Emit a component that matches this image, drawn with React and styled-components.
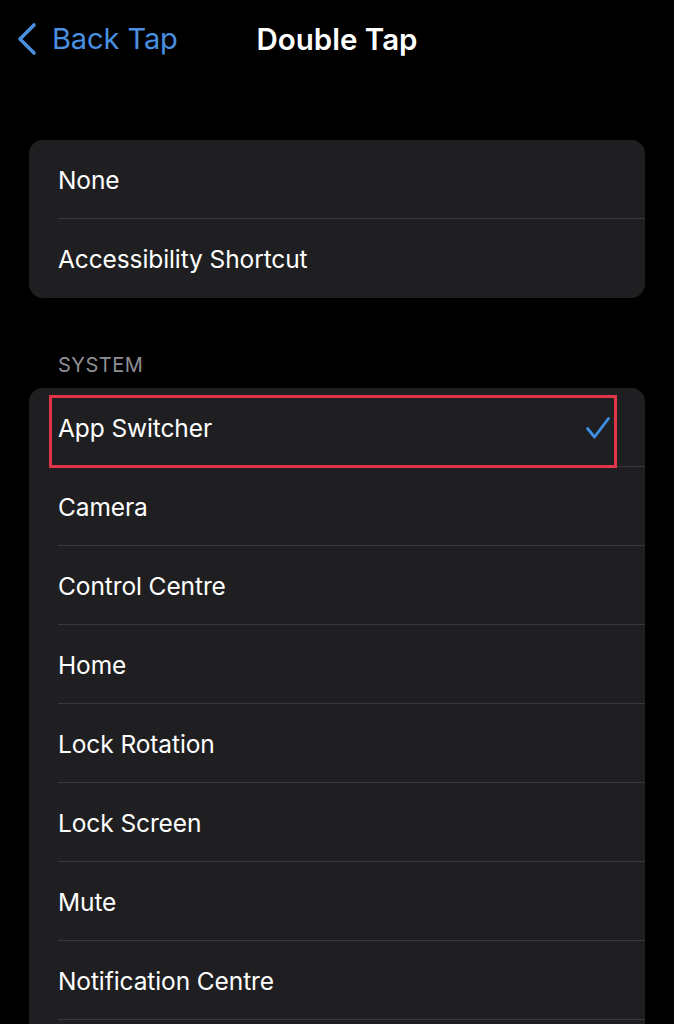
import React from 'react';
import styled, { createGlobalStyle } from 'styled-components';

const GlobalStyle = createGlobalStyle`
  html, body {
    margin: 0;
    padding: 0;
    background: #000;
  }
  body {
    font-family: Inter, "Liberation Sans", sans-serif;
    -webkit-font-smoothing: antialiased;
  }
`;

const Screen = styled.div`
  width: 674px;
  height: 1024px;
  overflow: hidden;
  background: #000;
  color: #fff;
`;

const NavBar = styled.div`
  position: relative;
  height: 78px;
  display: flex;
  align-items: center;
  justify-content: center;
`;

const BackButton = styled.div`
  position: absolute;
  left: 16px;
  top: 21px;
  display: flex;
  align-items: center;
  gap: 14px;
  color: #4a8fe0;
  font-size: 29px;
  letter-spacing: -0.1px;
`;

const Title = styled.div`
  font-size: 29.5px;
  font-weight: 600;
  letter-spacing: 0;
`;

const Content = styled.div`
  padding: 62px 29px 0 29px;
`;

const Group = styled.div`
  background: #1f1f21;
  border-radius: 14px;
  overflow: hidden;
  margin-bottom: ${(p) => p.$gap || 0}px;
`;

const SectionHeader = styled.div`
  padding: 0 0 11px 29px;
  font-size: 20px;
  color: #8e8e93;
  letter-spacing: 0.5px;
`;

const Row = styled.div`
  position: relative;
  height: 79px;
  display: flex;
  align-items: center;
  padding-left: 29px;
  padding-right: 34px;
  font-size: 24.5px;
  letter-spacing: -0.1px;
  box-sizing: border-box;

  &:not(:last-child)::after {
    content: '';
    position: absolute;
    left: 29px;
    right: 0;
    bottom: 0;
    height: 1px;
    background: #38383b;
  }
`;

const Label = styled.span`
  flex: 1;
`;

const Highlight = styled.div`
  position: absolute;
  left: 20px;
  right: 28px;
  top: 7px;
  height: 73px;
  border: 3px solid #e0364c;
  box-sizing: border-box;
  pointer-events: none;
  z-index: 1;
`;

const Check = () => (
  <svg width="26" height="24" viewBox="0 0 26 24" fill="none">
    <path
      d="M2.5 12.5 L9.5 21 L23.5 2.5"
      stroke="#3d8fe4"
      strokeWidth="2.8"
      strokeLinecap="round"
      strokeLinejoin="round"
    />
  </svg>
);

const Chevron = () => (
  <svg width="22" height="34" viewBox="0 0 22 34" fill="none">
    <path
      d="M18 3 L4 17 L18 31"
      stroke="#4a8fe0"
      strokeWidth="3.6"
      strokeLinecap="round"
      strokeLinejoin="round"
    />
  </svg>
);

const topItems = ['None', 'Accessibility Shortcut'];
const systemItems = [
  'App Switcher',
  'Camera',
  'Control Centre',
  'Home',
  'Lock Rotation',
  'Lock Screen',
  'Mute',
  'Notification Centre',
  '',
];

export default function App() {
  return (
    <>
      <GlobalStyle />
      <Screen>
        <NavBar>
          <BackButton>
            <Chevron />
            <span>Back Tap</span>
          </BackButton>
          <Title>Double Tap</Title>
        </NavBar>
        <Content>
          <Group $gap={55}>
            {topItems.map((item) => (
              <Row key={item}>
                <Label>{item}</Label>
              </Row>
            ))}
          </Group>
          <SectionHeader>SYSTEM</SectionHeader>
          <Group>
            {systemItems.map((item, i) => (
              <Row key={i}>
                <Label>{item}</Label>
                {item === 'App Switcher' && (
                  <>
                    <Check />
                    <Highlight />
                  </>
                )}
              </Row>
            ))}
          </Group>
        </Content>
      </Screen>
    </>
  );
}
